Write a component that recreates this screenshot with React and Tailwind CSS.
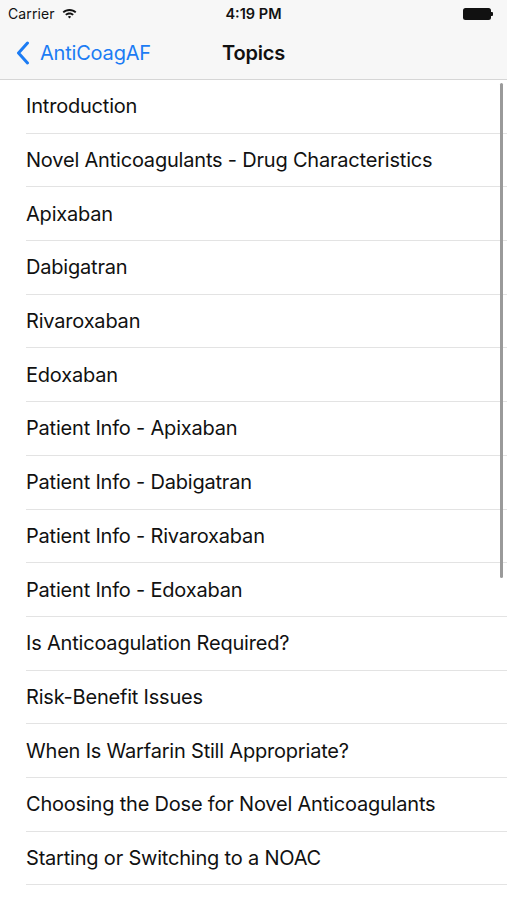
import React from "react";

const topics = [
  "Introduction",
  "Novel Anticoagulants - Drug Characteristics",
  "Apixaban",
  "Dabigatran",
  "Rivaroxaban",
  "Edoxaban",
  "Patient Info - Apixaban",
  "Patient Info - Dabigatran",
  "Patient Info - Rivaroxaban",
  "Patient Info - Edoxaban",
  "Is Anticoagulation Required?",
  "Risk-Benefit Issues",
  "When Is Warfarin Still Appropriate?",
  "Choosing the Dose for Novel Anticoagulants",
  "Starting or Switching to a NOAC",
];

function Wifi() {
  return (
    <svg width="15" height="11" viewBox="0 0 15 11">
      <path d="M7.5 1C4.8 1 2.4 2 0.6 3.7L1.9 5.1C3.4 3.7 5.3 2.9 7.5 2.9S11.6 3.7 13.1 5.1L14.4 3.7C12.6 2 10.2 1 7.5 1Z" fill="#111" />
      <path d="M7.5 4.6C5.8 4.6 4.3 5.2 3.2 6.3L4.5 7.6C5.3 6.9 6.3 6.4 7.5 6.4S9.7 6.9 10.5 7.6L11.8 6.3C10.7 5.2 9.2 4.6 7.5 4.6Z" fill="#111" />
      <path d="M7.5 8C6.9 8 6.3 8.3 5.9 8.7L7.5 10.4L9.1 8.7C8.7 8.3 8.1 8 7.5 8Z" fill="#111" />
    </svg>
  );
}

export default function App() {
  return (
    <div
      className="w-[507px] h-[900px] bg-white overflow-hidden relative"
      style={{ fontFamily: "Inter, 'Noto Sans', sans-serif" }}
    >
      <div className="bg-[#f7f7f7] border-b border-[#d6d6d6] h-[80px] flex flex-col">
        <div className="h-[27px] flex items-center justify-between px-[8px] relative">
          <div className="flex items-center gap-[7px]">
            <span className="text-[14px] text-[#111] tracking-[0.1px]">Carrier</span>
            <Wifi />
          </div>
          <span className="absolute left-1/2 -translate-x-1/2 text-[14.5px] font-semibold text-[#111]">4:19 PM</span>
          <div className="flex items-center mr-[6px]">
            <div className="w-[28px] h-[12px] rounded-[2.5px] bg-[#111]" />
            <div className="w-[2px] h-[4px] bg-[#111] rounded-r-[1px]" />
          </div>
        </div>
        <div className="flex-1 flex items-center relative">
          <div className="flex items-center pl-[16px] text-[#1c7cf4]">
            <svg width="14" height="24" viewBox="0 0 14 24" className="mr-[10px]">
              <path d="M11.5 2L2.5 12L11.5 22" stroke="#1c7cf4" strokeWidth="3" fill="none" strokeLinecap="round" strokeLinejoin="round" />
            </svg>
            <span className="text-[20px] tracking-[-0.2px]">AntiCoagAF</span>
          </div>
          <span className="absolute left-1/2 -translate-x-1/2 text-[20px] font-semibold text-[#111] tracking-[-0.2px]">Topics</span>
        </div>
      </div>
      <div className="flex flex-col">
        {topics.map((t) => (
          <div key={t} className="pl-[26px] h-[53.7px] flex">
            <div className="flex-1 flex items-center border-b border-[#e3e3e3] text-[20px] text-[#111] tracking-[-0.2px]">
              {t}
            </div>
          </div>
        ))}
      </div>
      <div className="absolute right-[4px] top-[83px] w-[3px] h-[495px] rounded-full bg-[#9a9a9a]" />
    </div>
  );
}
